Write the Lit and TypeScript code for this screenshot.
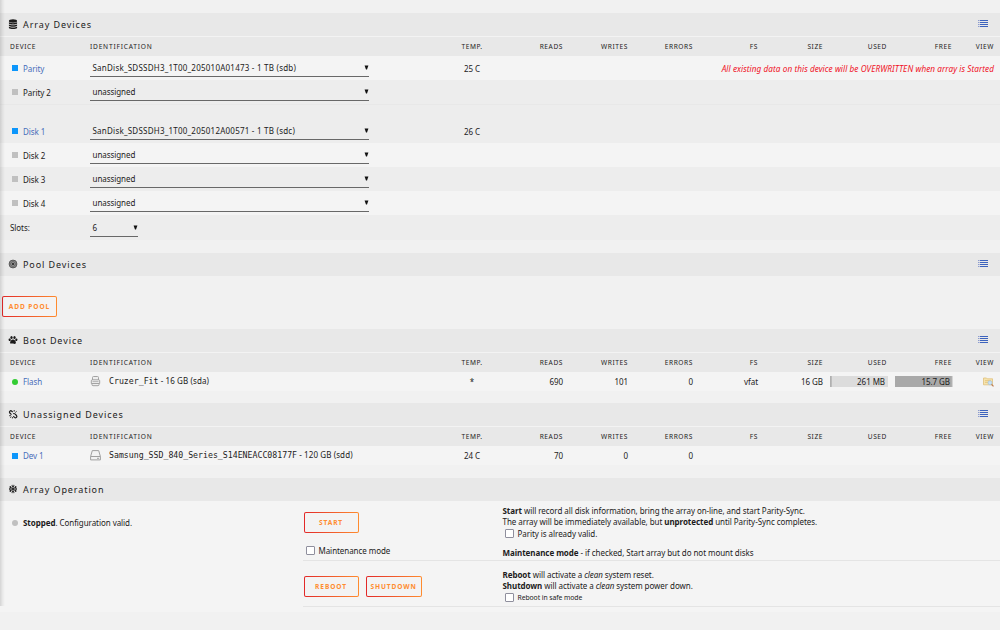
import { LitElement, html, css, svg, nothing } from "lit";
import { customElement, property } from "lit/decorators.js";

const glyphs: Record<string, unknown> = {
  database: svg`<g fill="#1c1b1b"><ellipse cx="5" cy="2" rx="4.1" ry="1.7"/><path d="M.9 3.3c1.5 1.1 6.7 1.1 8.2 0v1.3c-1 1.3-7.2 1.3-8.2 0z"/><path d="M.9 5.5c1.5 1.1 6.7 1.1 8.2 0v1.3c-1 1.3-7.2 1.3-8.2 0z"/><path d="M.9 7.7c1.5 1.1 6.7 1.1 8.2 0v1.2c-1 1.3-7.2 1.3-8.2 0z"/></g>`,
  pool: svg`<circle cx="5" cy="5" r="3.9" fill="#999" stroke="#4a4a4a" stroke-width=".9"/><circle cx="5" cy="5" r="2.4" fill="none" stroke="#555" stroke-width=".8"/><circle cx="5" cy="5" r="1.1" fill="#222"/>`,
  paw: svg`<g fill="#1c1b1b"><ellipse cx="3.5" cy="2.5" rx="1.15" ry="1.5"/><ellipse cx="6.5" cy="2.5" rx="1.15" ry="1.5"/><ellipse cx="1.7" cy="4.8" rx="1.1" ry="1.3" transform="rotate(-20 1.7 4.8)"/><ellipse cx="8.3" cy="4.8" rx="1.1" ry="1.3" transform="rotate(20 8.3 4.8)"/><path d="M5 4.6c1.5 0 2.9 1.8 2.9 3.2S6.5 9 5 8.6 2.1 9.2 2.1 7.8 3.5 4.6 5 4.6z"/></g>`,
  unlink: svg`<g fill="none" stroke="#1c1b1b" stroke-width="1.2"><path d="M4.7 3.2 3.8 2.2C2.5 1 .8 2.7 1.8 4l1.7 1.7M5.3 7.3l1.2 1.1c1.3 1.1 3-.5 2-1.9L6.9 4.9c-.6-.5-1.2-.5-1.7-.1"/><path d="M6.2 2.6V1M7.3 3.5l1.3-1.1M1.2 6.7h1.7M2.2 8.7l1.2-1.2M4.4 9.4V8" stroke-width=".9"/></g>`,
  snowflake: svg`<path d="M5 .8v8.400M1.400 2.900l7.200 4.200M1.400 7.100l7.200-4.200M3.600 1.500 5 2.800l1.400-1.300M3.600 8.500 5 7.200l1.400 1.300M1.200 4.500 3 4l-.5-2M8.800 5.500 7 6l.5 2M1.200 5.500 3 6l-.5 2M8.800 4.500 7 4l.5-2" fill="none" stroke="#1c1b1b" stroke-width=".95"/>`
};

const columns = ["Device", "Identification", "Temp.", "Reads", "Writes", "Errors", "FS", "Size", "Used", "Free", "View"];

@customElement("panel-title")
export class PanelTitle extends LitElement {
  @property() icon = "";
  @property() label = "";
  @property({ type: Boolean }) list = false;

  static styles = css`
    :host {
      display: flex;
      align-items: center;
      box-sizing: border-box;
      height: 23px;
      padding: 0 12px 1px 8px;
      background: #e8e8e8;
      font-size: 9px;
      letter-spacing: 0.91px;
    }
    .icon {
      width: 10px;
      height: 10px;
      margin-right: 5px;
    }
    .label {
      flex: 1;
    }
    .list {
      width: 10px;
      height: 8px;
    }
  `;

  render() {
    return html`
      <svg class="icon" viewBox="0 0 10 10">${glyphs[this.icon]}</svg>
      <span class="label">${this.label}</span>
      ${this.list
        ? html`<svg class="list" viewBox="0 0 10 8">
            <path d="M0 .5h1.5M0 2.5h1.5M0 4.5h1.5M0 6.5h1.5" stroke="#8b9bd0" />
            <path d="M2 .5h8M2 2.5h8M2 4.5h8M2 6.5h8" stroke="#3d63bd" stroke-width="1.2" />
          </svg>`
        : nothing}
    `;
  }
}

@customElement("app-root")
export class AppRoot extends LitElement {
  static styles = css`
    :host {
      display: block;
      position: relative;
      width: 1000px;
      height: 630px;
      overflow: hidden;
      background: #f1f1f1;
      color: #1c1b1b;
      font-family: "Noto Sans", "Open Sans", sans-serif;
      font-size: 8px;
      letter-spacing: -0.06px;
      line-height: 11px;
      white-space: nowrap;
    }
    .shade {
      position: absolute;
      left: 0;
      top: 0;
      width: 5px;
      height: 606px;
      background: linear-gradient(90deg, rgba(0, 0, 0, 0.13), rgba(0, 0, 0, 0.05) 50%, transparent);
    }
    .page {
      display: flex;
      flex-direction: column;
      padding-top: 13px;
    }
    .array {
      height: 240px;
    }
    .pool {
      height: 76px;
    }
    .boot {
      height: 74px;
    }
    .unassigned {
      height: 75px;
    }
    .row {
      display: grid;
      grid-template-columns: 80px 360px 44px 69px 65px 65px 65px 65px 64px 65px 42px;
      align-items: center;
      height: 24px;
      padding-left: 10px;
      background: #ededed;
    }
    .row > * {
      text-align: right;
    }
    .row > :nth-child(-n + 2) {
      text-align: left;
    }
    .row > :nth-child(3) {
      text-align: center;
    }
    .head {
      height: 20px;
      box-sizing: border-box;
      background: #e8e8e8;
      border-top: 1px solid #f3f3f3;
      font-size: 6.6px;
      letter-spacing: 0.58px;
      text-transform: uppercase;
    }
    .head > :nth-child(2) {
      letter-spacing: 0.8px;
    }
    .light {
      background: #f4f4f4;
    }
    .short {
      height: 19px;
    }
    .spacer {
      height: 14px;
      background: #ededed;
      border-top: 1px solid #e8e8e8;
    }
    .slots {
      height: 25px;
    }
    .name {
      display: flex;
      align-items: center;
      padding-left: 2px;
      gap: 5px;
    }
    .link {
      color: #486dba;
    }
    .orb {
      width: 6px;
      height: 6px;
      background: #c0c0c0;
    }
    .blue {
      background: #0c96fb;
    }
    .green {
      background: #33cc33;
    }
    .round {
      border-radius: 50%;
    }
    .select {
      display: flex;
      justify-content: space-between;
      align-items: center;
      box-sizing: border-box;
      width: 279px;
      height: 18px;
      padding-left: 2.5px;
      border-bottom: 1px solid #686868;
    }
    .assigned {
      letter-spacing: 0.23px;
    }
    .small {
      width: 48px;
    }
    .arrow {
      width: 5px;
      height: 5px;
    }
    .row > .warning {
      grid-column: 4 / -1;
      color: #f0111f;
      font-style: italic;
      font-size: 8.2px;
      letter-spacing: 0.06px;
      text-align: right;
    }
    .ident {
      display: flex;
      align-items: center;
      gap: 8px;
      padding-bottom: 1px;
      letter-spacing: 0.1px;
    }
    .drive {
      width: 11px;
      height: 12px;
    }
    .mono {
      font-family: "DejaVu Sans Mono", monospace;
      font-size: 8.22px;
      letter-spacing: 0;
    }
    .usage {
      justify-self: end;
      box-sizing: border-box;
      width: 58px;
      height: 11px;
      padding-right: 3px;
      margin-right: -1px;
      background: #dcdcdc;
    }
    .bar-used {
      background: linear-gradient(#b0b0b0, #b0b0b0) no-repeat #dcdcdc;
    }
    .bar-free {
      background: linear-gradient(#a9a9a9, #a9a9a9) no-repeat #d4d4d4;
    }
    .view {
      display: flex;
      justify-content: flex-end;
    }
    .browse {
      width: 11px;
      height: 10px;
    }
    .button {
      box-sizing: border-box;
      min-width: 55px;
      height: 21px;
      padding: 0 4px;
      border: 1.5px solid transparent;
      border-radius: 2px;
      background:
        linear-gradient(#f3f3f3, #f3f3f3) padding-box,
        linear-gradient(90deg, #e22828, #ff8c2f) border-box;
      color: #ff8c2f;
      font: bold 6.6px/18px "Noto Sans", sans-serif;
      letter-spacing: 0.9px;
      text-align: center;
      text-transform: uppercase;
    }
    .pool-actions {
      display: flex;
      padding: 20px 0 0 2px;
    }
    .operation {
      display: grid;
      grid-template-columns: 302.5px 200px 1fr;
      height: 111px;
      background: #f4f4f4;
    }
    .status {
      display: flex;
      align-items: center;
      height: 11px;
      padding: 16px 0 0 12px;
      gap: 5px;
    }
    .controls,
    .notes {
      box-sizing: border-box;
      border-bottom: 1px solid #e4e4e4;
      height: 60px;
    }
    .controls {
      padding: 11px 0 0 1px;
    }
    .notes {
      padding-top: 4px;
      line-height: 11.4px;
    }
    .power {
      height: 46px;
    }
    .controls.power {
      display: flex;
      gap: 7px;
      padding-top: 15px;
    }
    .notes.power {
      padding-top: 8px;
    }
    .check {
      display: flex;
      align-items: center;
      gap: 3.5px;
      padding-left: 2.5px;
    }
    .box {
      box-sizing: border-box;
      width: 9px;
      height: 9px;
      border: 1px solid #8f8f9d;
      border-radius: 1px;
      background: #fff;
    }
    .maintenance {
      padding-top: 12px;
    }
    .mode-note {
      padding-top: 7.5px;
    }
    .safe {
      font-size: 6.8px;
    }
  `;

  renderHead() {
    return html`<div class="row head">${columns.map((name) => html`<span>${name}</span>`)}</div>`;
  }

  renderName(name: string, color: string) {
    return html`<div class="name ${color ? "link" : ""}"><i class="orb ${color}"></i>${name}</div>`;
  }

  renderSelect(value: string, style = "") {
    return html`
      <div class="select ${style}">
        <span>${value}</span>
        <svg class="arrow" viewBox="0 0 5 5"><path d="M.6.4h3.8L3 4.400H2z" fill="#111" /></svg>
      </div>
    `;
  }

  renderDisk(name: string, disk: string, light: boolean, temp = "", warning = "") {
    return html`
      <div class="row ${light ? "light" : ""}">
        ${this.renderName(name, temp ? "blue" : "")}
        ${this.renderSelect(disk || "unassigned", disk ? "assigned" : "")}
        <span>${temp}</span>
        ${warning ? html`<span class="warning">${warning}</span>` : nothing}
      </div>
    `;
  }

  renderArray() {
    return html`
      <section class="array">
        <panel-title icon="database" label="Array Devices" list></panel-title>
        ${this.renderHead()}
        ${this.renderDisk("Parity", "SanDisk_SDSSDH3_1T00_205010A01473 - 1 TB (sdb)", true, "25 C",
          "All existing data on this device will be OVERWRITTEN when array is Started")}
        ${this.renderDisk("Parity 2", "", false)}
        <div class="spacer"></div>
        ${this.renderDisk("Disk 1", "SanDisk_SDSSDH3_1T00_205012A00571 - 1 TB (sdc)", false, "26 C")}
        ${this.renderDisk("Disk 2", "", true)}
        ${this.renderDisk("Disk 3", "", false)}
        ${this.renderDisk("Disk 4", "", true)}
        <div class="row slots"><span>Slots:</span>${this.renderSelect("6", "small")}</div>
      </section>
    `;
  }

  renderBoot() {
    return html`
      <section class="boot">
        <panel-title icon="paw" label="Boot Device" list></panel-title>
        ${this.renderHead()}
        <div class="row light short">
          ${this.renderName("Flash", "green round")}
          <div class="ident">
            <svg class="drive" viewBox="0 0 11 12">
              <path d="M2.500 5V2.500q0-1 1-1h4q1 0 1 1V5M2.300 4.800h6.400q1 0 1 1v2.700H1.300V5.800q0-1 1-1zM2 8.500v1.200q0 1 1 1h5q1 0 1-1V8.500" fill="#eee" stroke="#a3a3a3" />
              <path d="M2.500 6.600h6" stroke="#b5b5b5" />
            </svg>
            <span><span class="mono">Cruzer_Fit</span> - 16 GB (sda)</span>
          </div>
          <span>*</span><span>690</span><span>101</span><span>0</span><span>vfat</span><span>16 GB</span>
          <span class="usage bar-used" style="background-size: 3% 100%">261 MB</span>
          <span class="usage bar-free" style="background-size: 98% 100%">15.7 GB</span>
          <span class="view">
            <svg class="browse" viewBox="0 0 11 10">
              <path d="M.5 1h3l.8.8h5.200v6H.5z" fill="#f6e3ae" stroke="#e0c07a" stroke-width=".8" />
              <path d="M2 3.600h6M2 5.400h3" stroke="#e0bd70" stroke-width=".7" />
              <circle cx="7" cy="5.800" r="2" fill="#c6e1f6" stroke="#a8c4dc" stroke-width=".8" />
              <path d="m8.500 7.400 2 2" stroke="#bb7b50" stroke-width="1.300" />
            </svg>
          </span>
        </div>
      </section>
    `;
  }

  renderUnassigned() {
    return html`
      <section class="unassigned">
        <panel-title icon="unlink" label="Unassigned Devices" list></panel-title>
        ${this.renderHead()}
        <div class="row light short">
          ${this.renderName("Dev 1", "blue")}
          <div class="ident">
            <svg class="drive" viewBox="0 0 11 12">
              <path d="M.6 7.500 2.300 1.600h6.400l1.700 5.900v3.400H.6zM.6 7.500h9.800" fill="#f3f3f3" stroke="#a0a0a0" />
              <path d="M7 9.300h2" stroke="#a0a0a0" />
            </svg>
            <span><span class="mono">Samsung_SSD_840_Series_S14ENEACC08177F</span> - 120 GB (sdd)</span>
          </div>
          <span>24 C</span><span>70</span><span>0</span><span>0</span>
        </div>
      </section>
    `;
  }

  renderOperation() {
    return html`
      <section>
        <panel-title icon="snowflake" label="Array Operation"></panel-title>
        <div class="operation">
          <div class="status"><i class="orb round"></i><span><b>Stopped</b>. Configuration valid.</span></div>
          <div>
            <div class="controls">
              <button class="button">Start</button>
              <div class="check maintenance"><i class="box"></i>Maintenance mode</div>
            </div>
            <div class="controls power">
              <button class="button">Reboot</button>
              <button class="button">Shutdown</button>
            </div>
          </div>
          <div>
            <div class="notes">
              <div><b>Start</b> will record all disk information, bring the array on-line, and start Parity-Sync.</div>
              <div>The array will be immediately available, but <b>unprotected</b> until Parity-Sync completes.</div>
              <div class="check"><i class="box"></i>Parity is already valid.</div>
              <div class="mode-note"><b>Maintenance mode</b> - if checked, Start array but do not mount disks</div>
            </div>
            <div class="notes power">
              <div><b>Reboot</b> will activate a <em>clean</em> system reset.</div>
              <div><b>Shutdown</b> will activate a <em>clean</em> system power down.</div>
              <div class="check safe"><i class="box"></i>Reboot in safe mode</div>
            </div>
          </div>
        </div>
      </section>
    `;
  }

  render() {
    return html`
      <div class="page">
        ${this.renderArray()}
        <section class="pool">
          <panel-title icon="pool" label="Pool Devices" list></panel-title>
          <div class="pool-actions"><button class="button">Add Pool</button></div>
        </section>
        ${this.renderBoot()}
        ${this.renderUnassigned()}
        ${this.renderOperation()}
      </div>
      <div class="shade"></div>
    `;
  }
}
